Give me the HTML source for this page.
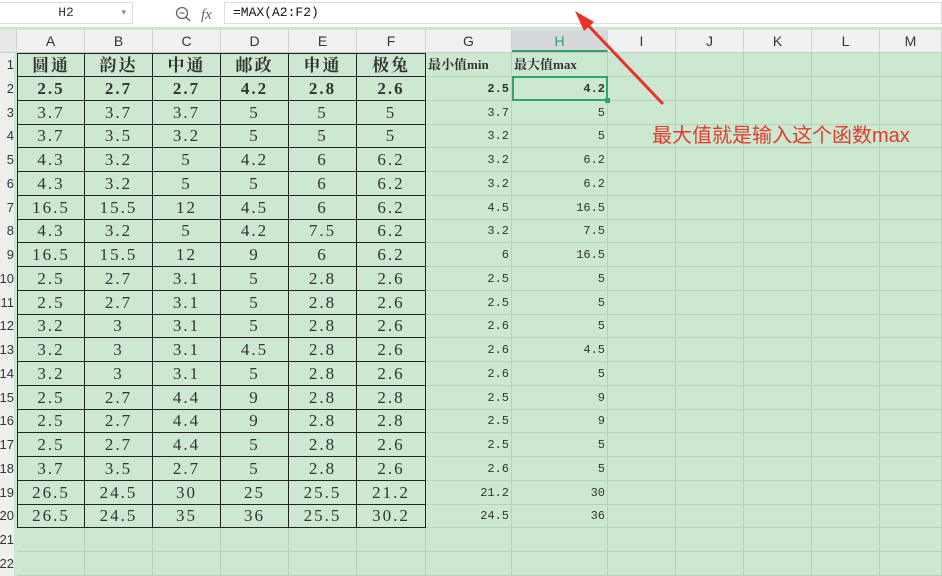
<!DOCTYPE html>
<html><head><meta charset="utf-8"><style>
*{margin:0;padding:0;box-sizing:border-box}
body{width:942px;height:554px;overflow:hidden;background:#cde8d0;position:relative;font-family:"Liberation Serif","Noto Serif CJK SC",serif}
#top{position:absolute;left:0;top:0;width:942px;height:28px;background:#fff;border-bottom:1px solid #d8d8d8}
#nb{position:absolute;left:0;top:2px;width:133px;height:22px;border:1px solid #ddd;border-left:none;font:13px "Liberation Mono",monospace;color:#333;text-align:center;line-height:20px}
#fx{position:absolute;left:224px;top:2px;width:718px;height:22px;border:1px solid #ddd;font:13px "Liberation Mono",monospace;line-height:20px;padding-left:8px;color:#111}
#hdr{position:absolute;left:0;top:30px;height:23px;width:942px;background:#f0f1f0;border-bottom:1px solid #c8c8c8}
.h{position:absolute;top:0;height:22px;text-align:center;font:14px "Liberation Sans",sans-serif;line-height:22px;color:#333;border-right:1px solid #d4d4d4}
.r{position:absolute;left:0;width:942px;height:24px}
.c{position:absolute;top:0;height:24px;border-right:1px solid #b4d3b8;border-bottom:1px solid #b4d3b8;text-align:center;font-size:17px;line-height:24px;color:#333;white-space:nowrap;letter-spacing:2px}
.d{border-right:1.5px solid #222;border-bottom:1.5px solid #222}
.n{text-align:right;font:12px "Liberation Mono",monospace;line-height:24px;padding-right:2px;letter-spacing:0}
.rh{position:absolute;left:0;top:0;width:14px;height:24px;background:#eef0ee;font:13px "Liberation Sans",sans-serif;color:#333;line-height:24px;text-align:right;overflow:hidden;direction:rtl}
b{font-weight:bold}
</style></head><body>
<div id="top"><div id="nb">H2<span style="position:absolute;right:6px;top:0;font-size:9px;color:#888">▾</span></div>
<svg style="position:absolute;left:174px;top:5px" width="44" height="18"><circle cx="8" cy="8" r="5.5" fill="none" stroke="#666" stroke-width="1.3"/><line x1="12" y1="12" x2="16" y2="16" stroke="#666" stroke-width="1.3"/><line x1="5.5" y1="8" x2="10.5" y2="8" stroke="#666" stroke-width="1.2"/><text x="27" y="14" font-family="Liberation Serif" font-style="italic" font-size="15" fill="#666">fx</text></svg>
<div id="fx">=MAX(A2:F2)</div></div>
<div id="hdr">
<div class="h" style="left:0;width:17px;background:#e8e8e8"></div>
<div class="h" style="left:17px;width:68px">A</div><div class="h" style="left:85px;width:68px">B</div><div class="h" style="left:153px;width:68px">C</div><div class="h" style="left:221px;width:68px">D</div><div class="h" style="left:289px;width:68px">E</div><div class="h" style="left:357px;width:69px">F</div><div class="h" style="left:426px;width:86px">G</div><div class="h" style="left:512px;width:96px;background:#d6d9dc;color:#3a9a6a;border-bottom:2px solid #2fa36b">H</div><div class="h" style="left:608px;width:68px">I</div><div class="h" style="left:676px;width:68px">J</div><div class="h" style="left:744px;width:68px">K</div><div class="h" style="left:812px;width:68px">L</div><div class="h" style="left:880px;width:62px">M</div>
</div>
<div id="rows"></div>
<script>
(function(){
var data=[["圆通","韵达","中通","邮政","申通","极兔","最小值min","最大值max"],
["2.5","2.7","2.7","4.2","2.8","2.6","2.5","4.2"],
["3.7","3.7","3.7","5","5","5","3.7","5"],
["3.7","3.5","3.2","5","5","5","3.2","5"],
["4.3","3.2","5","4.2","6","6.2","3.2","6.2"],
["4.3","3.2","5","5","6","6.2","3.2","6.2"],
["16.5","15.5","12","4.5","6","6.2","4.5","16.5"],
["4.3","3.2","5","4.2","7.5","6.2","3.2","7.5"],
["16.5","15.5","12","9","6","6.2","6","16.5"],
["2.5","2.7","3.1","5","2.8","2.6","2.5","5"],
["2.5","2.7","3.1","5","2.8","2.6","2.5","5"],
["3.2","3","3.1","5","2.8","2.6","2.6","5"],
["3.2","3","3.1","4.5","2.8","2.6","2.6","4.5"],
["3.2","3","3.1","5","2.8","2.6","2.6","5"],
["2.5","2.7","4.4","9","2.8","2.8","2.5","9"],
["2.5","2.7","4.4","9","2.8","2.8","2.5","9"],
["2.5","2.7","4.4","5","2.8","2.6","2.5","5"],
["3.7","3.5","2.7","5","2.8","2.6","2.6","5"],
["26.5","24.5","30","25","25.5","21.2","21.2","30"],
["26.5","24.5","35","36","25.5","30.2","24.5","36"],
["","","","","","","",""],["","","","","","","",""]];
var L=[17,85,153,221,289,357,426,512,608,676,744,812,880],W=[68,68,68,68,68,69,86,96,68,68,68,68,62];
var h="";
for(var i=0;i<data.length;i++){
 var yy=53+i*23.75;
 h+='<div class="r" style="top:'+yy+'px"><div class="rh">'+(i+1)+'</div>';
 for(var j=0;j<13;j++){
  var t=j<8?data[i][j]:"",cls="c";
  if(j<6&&i<20)cls+=" d";
  if(j>=6&&j<8&&i>0)cls+=" n";
  var st="left:"+L[j]+"px;width:"+W[j]+"px;";
  if(j>=6&&i==0)st+="text-align:left;font-size:13px;font-weight:bold;padding-left:2px;letter-spacing:0;";
  if(j==0&&i<20)st+="border-left:1.5px solid #222;";
  if(i==0&&j<6)st+="border-top:1.5px solid #222;";
  if(i<2)t="<b>"+t+"</b>";
  h+='<div class="'+cls+'" style="'+st+'">'+t+'</div>';
 }
 h+='</div>';
}
document.getElementById("rows").innerHTML=h;
})();
</script>
<div style="position:absolute;left:512px;top:76px;width:96px;height:25px;border:2px solid #2fa36b"></div>
<div style="position:absolute;left:605px;top:98px;width:5px;height:5px;background:#2fa36b"></div>
<svg style="position:absolute;left:0;top:0" width="942" height="554"><line x1="663" y1="104" x2="583" y2="20" stroke="#e8322a" stroke-width="3"/><polygon points="575,11 594,22 584,31" fill="#e8322a"/></svg>
<div style="position:absolute;left:652px;top:119px;font:20px 'Liberation Sans','Noto Sans CJK SC',sans-serif;color:#e33b2b;white-space:nowrap">最大值就是输入这个函数max</div>
</body></html>
